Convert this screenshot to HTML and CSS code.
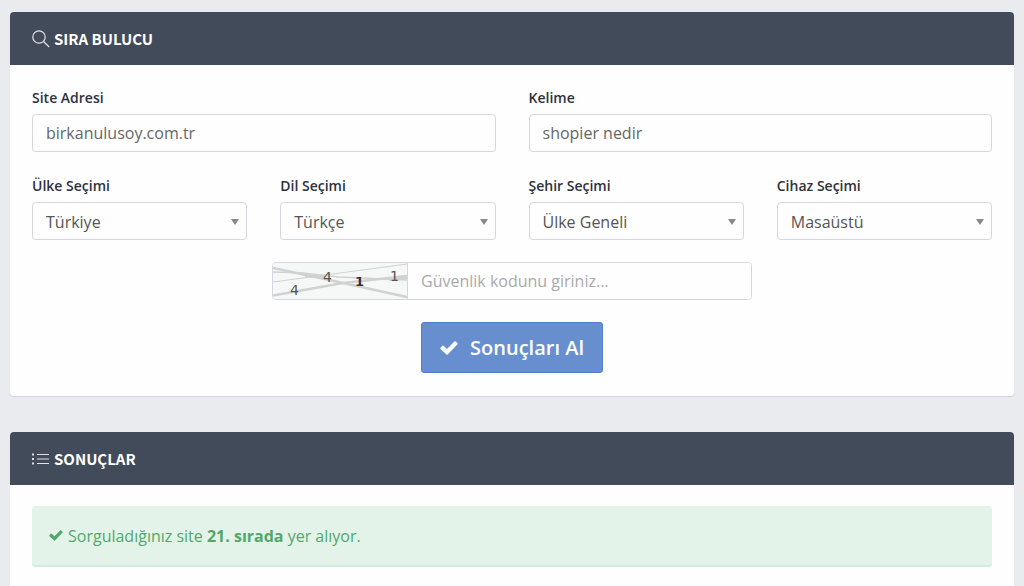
FILE: index.html
```html
<!DOCTYPE html>
<html lang="tr">
<head>
<meta charset="utf-8">
<meta name="viewport" content="width=device-width, initial-scale=1">
<title>Sıra Bulucu</title>
<link rel="stylesheet" href="styles.css">
</head>
<body>
<main class="page">
  <section class="panel">
    <header class="panel-header">
      <svg class="panel-icon" viewBox="0 0 18 18" aria-hidden="true"><circle cx="7" cy="7" r="6.2"/><path d="M11.5 11.5 17.2 17"/></svg>
      <h2 class="panel-title">SIRA BULUCU</h2>
    </header>
    <form class="panel-body">
      <div class="row row-two">
        <div class="field">
          <label class="label" for="site">Site Adresi</label>
          <input class="control" id="site" type="text" value="birkanulusoy.com.tr">
        </div>
        <div class="field">
          <label class="label" for="keyword">Kelime</label>
          <input class="control" id="keyword" type="text" value="shopier nedir">
        </div>
      </div>
      <div class="row row-four">
        <div class="field">
          <label class="label" for="country">Ülke Seçimi</label>
          <div class="select"><select class="control" id="country"><option>Türkiye</option></select></div>
        </div>
        <div class="field">
          <label class="label" for="language">Dil Seçimi</label>
          <div class="select"><select class="control" id="language"><option>Türkçe</option></select></div>
        </div>
        <div class="field">
          <label class="label" for="city">Şehir Seçimi</label>
          <div class="select"><select class="control" id="city"><option>Ülke Geneli</option></select></div>
        </div>
        <div class="field">
          <label class="label" for="device">Cihaz Seçimi</label>
          <div class="select"><select class="control" id="device"><option>Masaüstü</option></select></div>
        </div>
      </div>
      <div class="captcha">
        <svg class="captcha-image" viewBox="0 0 134 36" role="img" aria-label="Güvenlik kodu">
          <rect width="134" height="36" fill="#f5f8f7"/>
          <g fill="none" stroke="#d0d2d1">
            <path d="M0 19 134 1" stroke-width="1.2"/>
            <path d="M0 9 30 10 66 14 134 17" stroke-width="1.5"/>
            <path d="M0 32.500 70 20 134 13" stroke-width="2.6"/>
            <path d="M0 5 70 20 134 34" stroke-width="2.6"/>
            <path d="M32 13 52 14" stroke-width="3"/>
            <path d="M116 16.500 134 14.500" stroke-width="3.500"/>
          </g>
          <g class="captcha-digits">
            <text x="17" y="32">4</text>
            <text x="50" y="19">4</text>
            <text class="captcha-bold" x="82" y="23">1</text>
            <text x="117" y="18">1</text>
          </g>
        </svg>
        <input class="control captcha-input" type="text" aria-label="Güvenlik kodu" placeholder="Güvenlik kodunu giriniz...">
      </div>
      <button class="submit" type="button">
        <svg class="submit-icon" viewBox="0 0 18 14" aria-hidden="true"><path d="M17.5 3.2 7.7 13.4q-.6.6-1.2 0L.5 7.9q-.5-.6 0-1.2l1.8-1.9q.6-.5 1.2 0l3.5 3.2L14.4.6q.6-.6 1.2 0L17.5 2.2q.5.5 0 1Z"/></svg>
        Sonuçları Al
      </button>
    </form>
  </section>

  <section class="panel">
    <header class="panel-header">
      <svg class="panel-icon" viewBox="0 0 18 18" aria-hidden="true"><path d="M5 4.5h12M5 9h12M5 13.5h12"/><path class="bullets" d="M0 4.5h2M0 9h2M0 13.5h2"/></svg>
      <h2 class="panel-title">SONUÇLAR</h2>
    </header>
    <div class="panel-body">
      <div class="alert" role="status">
        <svg class="alert-icon" viewBox="0 0 18 14" aria-hidden="true"><path d="M17.5 3.2 7.7 13.4q-.6.6-1.2 0L.5 7.9q-.5-.6 0-1.2l1.8-1.9q.6-.5 1.2 0l3.5 3.2L14.4.6q.6-.6 1.2 0L17.5 2.2q.5.5 0 1Z"/></svg>
        <p class="alert-text">Sorguladığınız site <strong>21. sırada</strong> yer alıyor.</p>
      </div>
    </div>
  </section>
</main>
</body>
</html>
```
FILE: styles.css
```css
* {
  box-sizing: border-box;
}

body {
  margin: 0;
  background: #e9ebef;
  color: #2d323c;
  font-family: "Open Sans", "Noto Sans", sans-serif;
  font-size: 16px;
}

.page {
  display: flex;
  flex-direction: column;
  gap: 36px;
  padding: 12px 10px 0;
}

.panel {
  background: #fefefe;
  border-radius: 4px;
  box-shadow: 0 1px 1px #d0d3d8;
}

.panel-header {
  display: flex;
  align-items: center;
  gap: 4px;
  height: 53px;
  padding: 0 22px;
  background: #424b59;
  color: #fff;
  border-radius: 4px 4px 0 0;
}

.panel-icon {
  width: 18px;
  height: 18px;
  fill: none;
  stroke: #dfe1e5;
  stroke-width: 1.2;
}

.bullets {
  stroke-width: 2;
}

.panel-title {
  margin: 0;
  font-family: "Noto Sans CJK SC", "Open Sans", sans-serif;
  font-size: 15px;
  font-weight: 700;
  line-height: 22px;
}

.panel-body {
  display: flex;
  flex-direction: column;
  gap: 22px;
  padding: 21px 22px 23px;
}

.row {
  display: grid;
  gap: 33px;
}

.row-two {
  grid-template-columns: repeat(2, 1fr);
}

.row-four {
  grid-template-columns: repeat(4, 1fr);
}

.field {
  display: flex;
  flex-direction: column;
  gap: 4px;
  min-width: 0;
}

.label {
  font-size: 14px;
  font-weight: 600;
  line-height: 24px;
}

.control {
  width: 100%;
  height: 38px;
  padding: 0 13px;
  border: 1px solid #d5d7dc;
  border-radius: 4px;
  background: #fefefe;
  color: #666;
  font: inherit;
}

.control::placeholder {
  color: #aaa;
  opacity: 1;
}

.select {
  position: relative;
}

.select .control {
  appearance: none;
  padding-top: 2px;
  color: #555;
}

.select::after {
  content: "";
  position: absolute;
  top: 17px;
  right: 8px;
  border: 4px solid transparent;
  border-top: 6px solid #888;
  border-bottom: 0;
  pointer-events: none;
}

.captcha {
  display: flex;
  align-self: center;
  width: 50%;
  height: 38px;
  border: 1px solid #d5d7dc;
  border-radius: 4px;
  overflow: hidden;
}

.captcha-image {
  flex: none;
  width: 134px;
  height: 36px;
}

.captcha-digits {
  fill: #555;
  font-family: "DejaVu Sans", sans-serif;
  font-size: 14px;
}

.captcha-bold {
  fill: #333;
  font-weight: 700;
  font-size: 13px;
}

.captcha-input {
  flex: 1;
  min-width: 0;
  height: 36px;
  border-width: 0 0 0 1px;
  border-radius: 0;
}

.submit {
  display: flex;
  align-items: center;
  align-self: center;
  gap: 12px;
  height: 51px;
  padding: 0 18px;
  border: 1px solid #4f7fc9;
  border-radius: 3px;
  background: #678fcf;
  color: #fff;
  font: inherit;
  font-size: 20px;
  font-weight: 600;
}

.submit-icon {
  width: 18px;
  height: 14px;
  fill: #fff;
}

.alert {
  display: flex;
  align-items: center;
  gap: 5px;
  height: 61px;
  padding: 0 17px;
  border-bottom: 2px solid #d2eddc;
  border-radius: 3px;
  background: #e3f3e9;
  color: #54a76b;
}

.alert-icon {
  width: 14px;
  height: 11px;
  fill: #54a76b;
}

.alert-text {
  margin: 0;
  line-height: 24px;
}
```
